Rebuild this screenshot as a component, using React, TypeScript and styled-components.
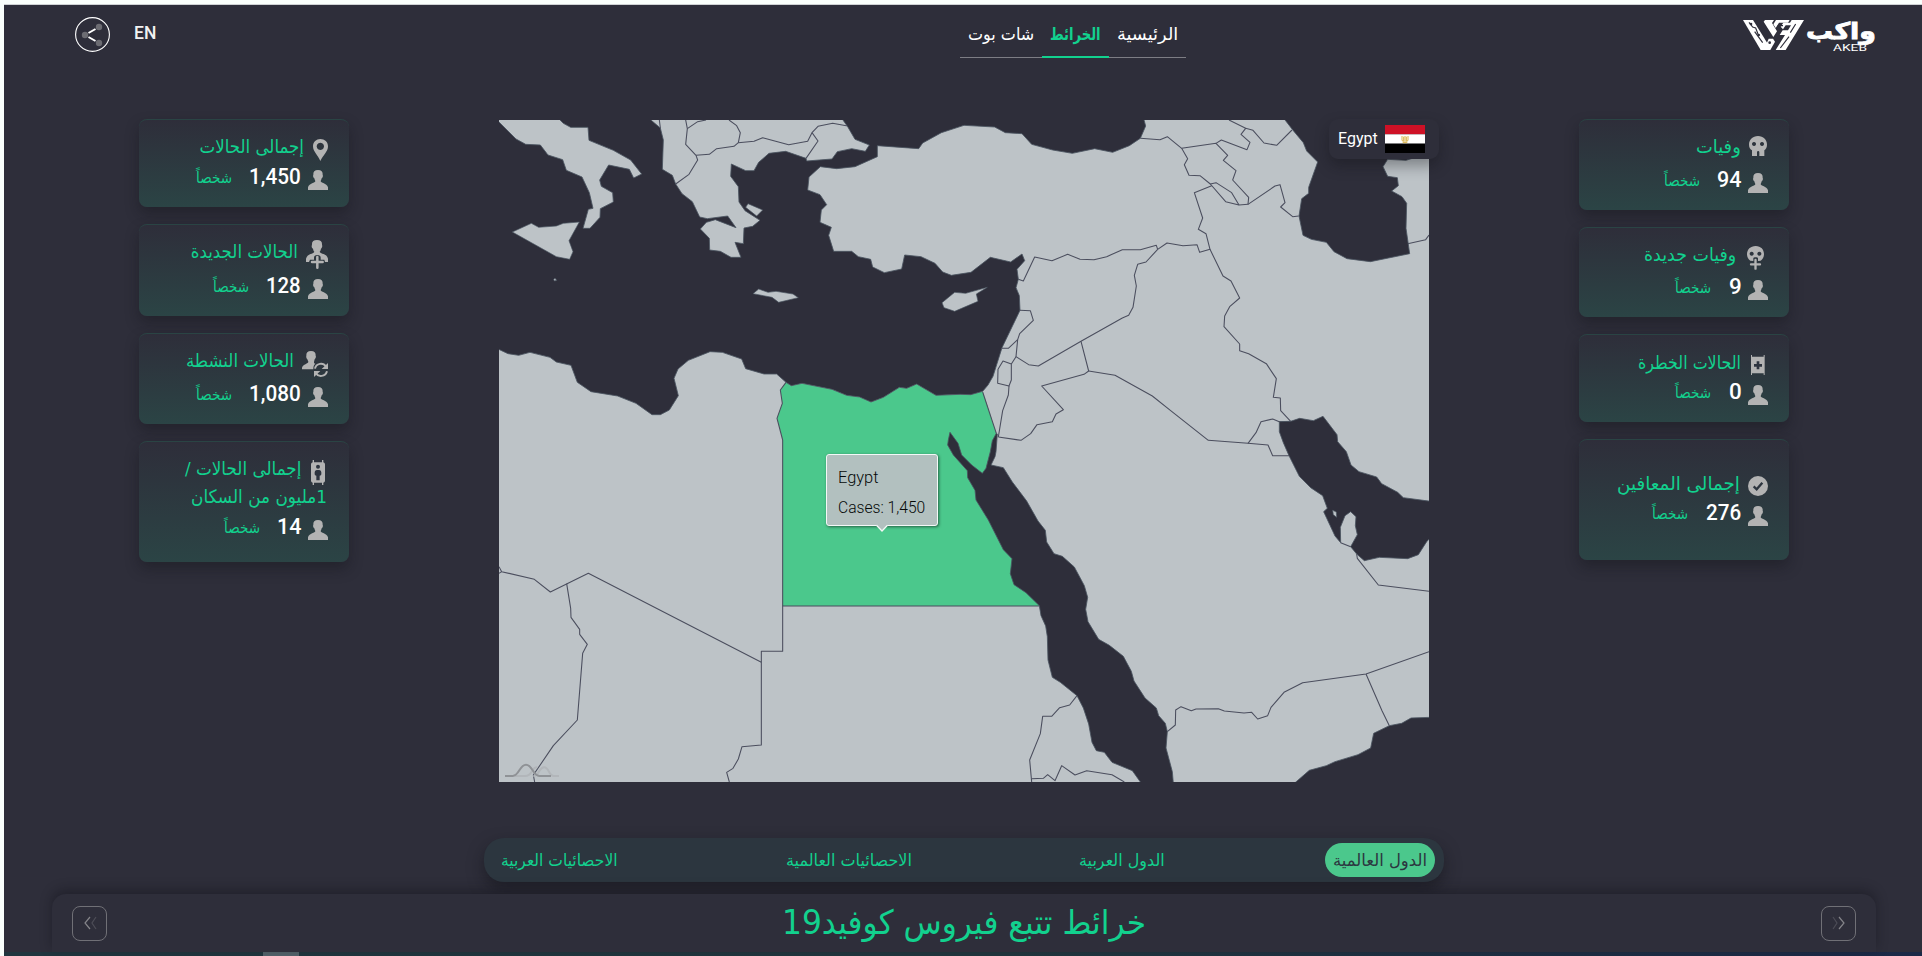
import React, { useLayoutEffect, useRef, useState } from "react";
import styled, { createGlobalStyle } from "styled-components";

const ARABIC = '"DejaVu Sans Condensed", "DejaVu Sans", sans-serif';
const LATIN = '"Roboto", "Open Sans", sans-serif';
const INK = "#2e2e3a";
const GREEN = "#12d18e";
const ICON = "#b3b3b3";

const GlobalStyle = createGlobalStyle`
  * { box-sizing: border-box; }
  body { margin: 0; background: #fafffc; font-family: ${LATIN}; overflow: hidden; }
  svg { display: block; }
`;

/* ---------- text fitted to a given width ---------- */

const FitBox = styled.span<{ $w: number }>`
  display: inline-block;
  width: ${(p) => p.$w}px;
  flex: none;
  white-space: nowrap;
`;
const FitInner = styled.span<{ $rtl: boolean }>`
  display: inline-block;
  transform-origin: ${(p) => (p.$rtl ? "right" : "left")} center;
`;

function Fit({ w, rtl = true, children }: { w: number; rtl?: boolean; children: React.ReactNode }) {
  const ref = useRef<HTMLSpanElement>(null);
  const [k, setK] = useState(1);
  useLayoutEffect(() => {
    if (ref.current) setK(w / ref.current.offsetWidth);
  }, [w]);
  return (
    <FitBox $w={w} dir={rtl ? "rtl" : "ltr"}>
      <FitInner ref={ref} $rtl={rtl} style={{ transform: `scaleX(${k})` }}>
        {children}
      </FitInner>
    </FitBox>
  );
}

/* ---------- frame ---------- */

const Screen = styled.div`
  margin: 4px 0 0 4px;
  height: 952px;
  background: ${INK};
  border-top: 1px solid #cfd2d4;
  display: flex;
  flex-direction: column;
`;

const Header = styled.header`
  height: 114px;
  flex: none;
  padding: 0 46px 0 71px;
  display: grid;
  grid-template-columns: 885px auto 1fr;
  align-items: start;
`;
const Tools = styled.div`
  display: flex;
  padding-top: 12px;
  gap: 24px;
`;
const Lang = styled.span`
  color: #f2f2f2;
  font: 500 17.5px/35px ${LATIN};
  margin-top: -1px;
`;
const Nav = styled.nav`
  display: flex;
  justify-self: start;
  margin-top: 12px;
  border-bottom: 1px solid #7d7d84;
`;
const NavItem = styled.a<{ $active?: boolean }>`
  height: 41px;
  padding: 0 8px;
  margin-bottom: -1px;
  font: ${(p) => (p.$active ? 700 : 400)} 17.5px/34px ${ARABIC};
  color: ${(p) => (p.$active ? GREEN : "#fff")};
  border-bottom: 2px solid ${(p) => (p.$active ? GREEN : "transparent")};
`;
const Brand = styled.div`
  justify-self: end;
  display: flex;
  gap: 2px;
  padding-top: 15px;
  color: #fff;
`;
const BrandWords = styled.div`
  display: flex;
  flex-direction: column;
  align-items: flex-end;
`;
const BrandName = styled.span`
  font: 700 23px/22px ${ARABIC};
  -webkit-text-stroke: 0.8px #fff;
  height: 24px;
`;
const BrandLatin = styled.span`
  font: 400 8.5px/8px ${LATIN};
  padding-right: 9px;
`;

const Main = styled.main`
  height: 719px;
  flex: none;
  padding: 0 135px;
  display: grid;
  grid-template-columns: 210px 930px 210px;
  column-gap: 150px;
  align-items: start;
`;
const Column = styled.section`
  display: flex;
  flex-direction: column;
  gap: 17px;
`;

/* ---------- statistic cards ---------- */

const Card = styled.article<{ $h: number; $pad: number }>`
  height: ${(p) => p.$h}px;
  padding: ${(p) => p.$pad}px 21px 0 12px;
  border-top: 1px solid #2a4444;
  border-radius: 8px;
  background: linear-gradient(#2e2e3a, #2b4445);
  box-shadow: 0 7px 14px rgba(16, 16, 22, 0.36);
  direction: rtl;
`;
const TitleRow = styled.div<{ $h: number }>`
  height: ${(p) => p.$h}px;
  display: flex;
  align-items: flex-start;
`;
const IconSlot = styled.span<{ $edge: number; $gap: number }>`
  flex: none;
  margin-right: ${(p) => p.$edge}px;
  margin-left: ${(p) => p.$gap}px;
`;
const Title = styled.h3<{ $shift: number }>`
  margin: ${(p) => p.$shift - 1}px 0 0;
  color: ${GREEN};
  font: 400 18.5px/20px ${ARABIC};
  white-space: nowrap;
`;
const SecondLine = styled.div`
  color: ${GREEN};
  font: 400 18.5px/20px ${ARABIC};
  margin: -1px 1px 1px 0;
  height: 32px;
`;
const ValueRow = styled.div`
  display: flex;
  height: 20px;
`;
const Value = styled.span`
  margin: -5px 7px 0 17px;
  color: #fff;
  font: 500 21.5px/24px ${LATIN};
`;
const Unit = styled.span`
  margin-top: -2px;
  color: ${GREEN};
  font: 400 15.5px/20px ${ARABIC};
`;

const Person = ({ size = 20 }: { size?: number }) => (
  <svg width={size} height={size} viewBox="0 0 60 60" fill={ICON}>
    <path d="M30 0C40 0 45 5 44 14C46 17 44 23 41 25C40 29 39 31 38 33C38 40 56 38 60 52V60H0V52C4 38 22 40 22 33C21 31 20 29 19 25C16 23 14 17 16 14C15 5 20 0 30 0Z" />
  </svg>
);
const Skull = () => (
  <svg width="18" height="20" viewBox="0 0 54 60" fill={ICON}>
    <path fillRule="evenodd" d="M27 0C43 0 54 11 54 26C54 35 50 40 46 43V60H31V49Q31 45 27.500 45T24 49V60H9V43C4 40 0 35 0 26C0 11 11 0 27 0ZM15 18a6 6 0 1 0 .1 0ZM39 18a6 6 0 1 0 .1 0Z" />
  </svg>
);
const SkullPlus = () => (
  <svg width="17" height="24" viewBox="0 0 51 72" fill={ICON}>
    <path fillRule="evenodd" d="M26 0C42 0 51 11 51 24C51 34 47 40 41 44L33 45V37C33 33 19 33 19 37V45L10 44C4 40 0 34 0 24C0 11 10 0 26 0ZM14 17a6 6 0 1 0 .1 0ZM37 17a6 6 0 1 0 .1 0Z" />
    <path d="M25.500 42V68M12 55H39" stroke={ICON} strokeWidth="7" strokeLinecap="round" />
  </svg>
);
const Bed = () => (
  <svg width="14" height="20" viewBox="0 0 42 60" fill={ICON}>
    <path d="M0 0H3V5H38V0H41V60H38V55H3V60H0Z" />
    <path d="M21 19V43M9 31H33" stroke="#2d343f" strokeWidth="8" />
  </svg>
);
const CheckDot = () => (
  <svg width="20" height="20" viewBox="0 0 60 60">
    <circle cx="30" cy="30" r="30" fill={ICON} />
    <path d="M17 31L26 40L43 20" fill="none" stroke="#2d353f" strokeWidth="7" />
  </svg>
);
const Pin = () => (
  <svg width="15" height="22" viewBox="0 0 45 66" fill={ICON}>
    <path fillRule="evenodd" d="M22 0C35 0 45 9 45 22C45 38 31 47 22 66C14 47 0 38 0 22C0 9 10 0 22 0ZM22 11a11 11 0 1 0 .1 0Z" />
  </svg>
);
const PersonPlus = () => (
  <svg width="22" height="29" viewBox="0 0 66 87" fill={ICON}>
    <path d="M33 0C44 0 49 5 48 15C50 18 48 24 45 26C44 31 43 33 41 35C42 42 63 40 66 56V66H57L55 59H44V53Q44 45 34 45T24 53V59H12L9 66H0V56C4 40 24 42 25 35C23 33 22 31 21 26C17 24 16 18 18 15C17 5 22 0 33 0Z" />
    <path d="M34 51V83M18 66H50" stroke={ICON} strokeWidth="7.500" strokeLinecap="round" />
  </svg>
);
const PersonCycle = () => (
  <svg width="26" height="26" viewBox="0 0 78 78" fill={ICON}>
    <path d="M27 0C37 0 42 5 41 14C43 17 41 22 38 25C37 29 36 31 36 35C37 37 38 38 40 38C34 43 34 50 34 55H0V50C3 38 19 39 19 32C18 30 17 28 16 25C13 22 12 17 13 14C12 5 17 0 27 0Z" />
    <path d="M39 53C42 36 64 34 71 46M75 61C70 78 49 78 43 68" fill="none" stroke={ICON} strokeWidth="6" />
    <path d="M78 36V54H59ZM36 78V60H55Z" />
  </svg>
);
const Stretcher = () => (
  <svg width="14" height="25" viewBox="0 0 42 75">
    <path fill={ICON} d="M5 0H9V7H33V0H37V7Q42 8 42 13V62Q42 67 37 68V75H33V68H9V75H5V68Q0 67 0 62V13Q0 8 5 7Z" />
    <circle cx="21" cy="20" r="6" fill="#2d343f" />
    <path fill="#2d343f" d="M17 30H25Q31 31 31 37V43Q31 47 26 47V61H16V47Q11 47 11 43V37Q11 31 17 30Z" />
  </svg>
);

interface Stat {
  title: string; w: number; value: string; vw: number; icon: React.ReactNode;
  h: number; pad: number; row: number; shift: number; edge?: number; gap?: number;
  second?: string;
}

const leftStats: Stat[] = [
  { title: "إجمالى الحالات", w: 105, value: "1,450", vw: 52, icon: <Pin />, h: 88, pad: 19, row: 31, shift: -1, gap: 9 },
  { title: "الحالات الجديدة", w: 107, value: "128", vw: 35, icon: <PersonPlus />, h: 92, pad: 15, row: 39, shift: 3, gap: 8 },
  { title: "الحالات النشطة", w: 108, value: "1,080", vw: 52, icon: <PersonCycle />, h: 91, pad: 17, row: 36, shift: 1, gap: 8 },
  { title: "إجمالى الحالات /", w: 116, value: "14", vw: 24, icon: <Stretcher />, h: 121, pad: 18, row: 28, shift: 0, edge: 3, gap: 10, second: "1مليون من السكان" },
];
const rightStats: Stat[] = [
  { title: "وفيات", w: 45, value: "94", vw: 24, icon: <Skull />, h: 91, pad: 16, row: 37, shift: 2, edge: 1, gap: 8 },
  { title: "وفيات جديدة", w: 92, value: "9", vw: 12.5, icon: <SkullPlus />, h: 90, pad: 18, row: 34, shift: 0, edge: 4, gap: 11 },
  { title: "الحالات الخطرة", w: 103, value: "0", vw: 12.5, icon: <Bed />, h: 88, pad: 20, row: 30, shift: -1, edge: 3, gap: 10 },
  { title: "إجمالى المعافين", w: 123, value: "276", vw: 35.5, icon: <CheckDot />, h: 121, pad: 36, row: 30, shift: -1, gap: 8 },
];

function StatCard(s: Stat) {
  return (
    <Card $h={s.h} $pad={s.pad}>
      <TitleRow $h={s.row}>
        <IconSlot $edge={s.edge ?? 0} $gap={s.gap ?? 8}>{s.icon}</IconSlot>
        <Title $shift={s.shift}><Fit w={s.w}>{s.title}</Fit></Title>
      </TitleRow>
      {s.second && <SecondLine><Fit w={136}>{s.second}</Fit></SecondLine>}
      <ValueRow>
        <Person />
        <Value><Fit w={s.vw} rtl={false}>{s.value}</Fit></Value>
        <Unit><Fit w={36}>شخصاً</Fit></Unit>
      </ValueRow>
    </Card>
  );
}

/* ---------- map ---------- */

const MapBox = styled.section`
  position: relative;
  margin-top: 1px;
  width: 930px;
  height: 662px;
`;

const NORTH_AFRICA_COAST =
  "1508,874 1472,884 1440,883 1368,886 1310,852 1280,865 1258,862 1210,892 1173,906 1139,891 1100,886 1056,868 966,850 934,857 918,847";

const MEDITERRANEAN =
  "50,60 57,66 108,117 137,133 181,135 204,165 248,179 259,211 306,231 328,278 339,325 325,328 309,385 330,385 360,352 361,326 400,306 398,278 364,259 359,240 386,195 448,208 461,234 485,222 452,180 400,151 327,121 324,82 272,82 250,70 236,56 " +
  "508,56 541,84 550,120 547,208 577,226 587,252 606,281 637,305 659,351 682,356 743,348 768,383 706,359 679,367 661,387 688,415 689,450 721,454 753,472 783,472 765,427 790,431 792,384 818,379 840,361 795,332 777,306 775,260 752,229 754,192 797,212 822,212 836,187 867,160 917,154 978,175 980,183 1056,177 1072,155 1115,146 1156,154 1168,135 1125,118 1103,80 1086,56 " +
  "1991,56 1997,78 1981,115 1948,137 1898,157 1844,146 1777,160 1718,150 1655,133 1626,101 1576,98 1544,81 1452,76 1384,98 1328,129 1316,146 1192,137 1192,170 1125,200 1070,206 1021,200 987,231 983,270 1020,284 1040,314 1024,330 1020,367 1054,382 1046,406 1061,454 1115,454 1135,470 1172,478 1178,501 1213,518 1265,507 1274,465 1323,470 1365,490 1388,516 1414,526 1473,517 1531,472 1592,486 1626,462 1634,482 1611,508 1615,538 1608,563 1618,587 1620,631 1566,743 1539,829 1524,855 " +
  NORTH_AFRICA_COAST +
  " 890,822 852,822 797,806 785,777 727,757 690,755 625,781 594,807 582,835 595,887 568,930 541,944 516,944 468,910 413,888 333,875 292,847 273,796 229,786 210,772 150,757 116,766 84,761 50,745";

const ISLANDS = [
  "97,396 154,370 176,382 229,378 250,370 298,366 267,422 279,455 269,478 229,470",
  "804,311 848,330 830,348 797,322",
  "819,581 836,567 864,577 888,574 939,582 955,593 896,607 876,592",
  "1386,608 1424,577 1457,580 1500,568 1522,562 1489,582 1494,604 1424,634 1392,623",
  "221,538 225,535 230,541 223,543",
];

const EGYPT =
  NORTH_AFRICA_COAST +
  " 901,870 907,910 891,955 908,1020 908,1518 1678,1518 1680,1500 1640,1370 1600,1200 1530,1110 1540,1060 1549,1000";

/* borders of the Balkans and Libya/Egypt */
const BORDERS_NW = [
  "538,60 541,84",
  "617,60 622,86 617,133 648,166 653,180 627,223 587,252",
  "622,86 653,65 678,60",
  "648,166 688,163 710,146 762,139 775,128 781,98 770,77 747,60",
  "775,128 822,124 848,113 926,134 983,124 996,98 1014,79 1058,70 1103,78",
  "996,98 1014,123 978,175",
  "918,847 901,870 907,910 891,955 908,1020",
];
/* Caucasus, Levant, Iraq, Iran */
const BORDERS_NE = [
  "541,115 600,119 622,110 665,145 683,176 673,194 687,226 720,227 751,252 797,305 837,315 864,313 945,258 960,254 975,308 962,321 998,350 1016,348",
  "665,145 768,130 803,166 790,181 828,212 818,240 866,292 864,313",
  "768,130 784,120 861,149 870,127 843,103 857,85 807,60",
  "857,85 879,91 912,129 950,136 996,90",
  "751,252 768,248 815,278 837,315",
  "755,257 703,278 728,354 715,388 738,401 750,448 789,528 813,543 839,594 809,620 794,648 792,680 839,732 839,752 866,761 919,791 949,836 940,892 961,894 962,932 992,964",
  "175,538 190,543 224,471 276,482 323,463 360,478 402,479 440,470 487,449 541,449 589,436 593,448 621,429 669,437 711,434 719,457 750,448",
  "593,448 558,486 533,493 523,526 529,558 519,622 506,646 487,654 363,724 235,798 206,794 168,770 173,719 179,701 220,661 211,632 180,631",
  "173,719 145,745 126,745",
  "363,724 386,813 372,823 245,858 310,929 288,942 277,965 231,974 212,1001 183,1021 115,1011",
  "386,813 465,826 577,888 632,932 745,1021 864,1030 924,1035 938,1067 987,1067",
  "864,1030 888,998 903,965 938,957 958,965 992,965",
  "168,770 154,792 154,840 147,858 113,850 114,808 129,783 154,792",
  "147,858 145,885 128,932 115,1011",
  "68,876 109,1000",
  "1343,431 1397,419 1407,405",
];
const CASPIAN =
  "972,56 1000,92 1030,128 1040,153 1073,186 1046,262 1046,280 1025,296 1017,348 1029,406 1054,418 1099,427 1122,455 1161,476 1231,485 1349,461 1338,385 1340,310 1326,290 1295,273 1315,257 1312,233 1283,229 1269,200 1283,178 1338,181 1360,174 1412,170 1412,56";

/* Chad, Niger, Sudan */
const BORDERS_SW = [
  "908,0 908,634 844,634 844,915 786,920 775,957 759,985 740,997 748,1026",
  "908,498 1678,498",
  "57,380 65,395 163,418 211,456 325,400 844,667",
  "57,400 65,395",
  "260,431 272,505 273,532 299,568 299,583 322,613 308,640 292,840 220,917 160,1005 164,1026",
];
/* Arabia and the Horn */
const BORDERS_SE = [
  "1142,308 1172,320",
  "1190,342 1192,355 1255,435 1407,454",
  "1407,635 1218,702 1028,728 972,757 933,802 923,827 893,837 875,817 852,819 793,813 775,806 708,807 694,812 663,800 647,810 646,855 622,875",
  "1218,702 1266,812 1288,857",
  "351,767 329,795 299,803 275,829 248,829 241,881 209,960 215,1026",
  "215,1016 250,1015 263,1004 285,1022 305,977 345,1005 380,992 456,1004 493,1026",
];
const SEAS_SE = [
  "958,-55 992,-56 1019,-65 1060,-58 1089,-71 1131,-16 1133,5 1159,35 1173,75 1197,95 1250,111 1265,131 1313,157 1330,173 1412,184 1412,292 1400,305 1375,344 1343,356 1258,352 1213,362 1190,342 1172,320 1192,284 1186,257 1188,230 1172,215 1155,227 1141,262 1142,308 1125,288 1091,215 1102,205 1088,167 1052,143 1018,109 987,47 970,8 958,-25",
  "1412,832 1353,834 1325,850 1288,857 1241,880 1232,924 1194,944 1125,965 1099,977 1048,991 1003,1030 1412,1030",
  "112,-18 108,35 105,50 93,75 130,83 157,126 200,183 234,243 256,271 260,306 282,341 307,349 343,381 373,437 383,472 377,508 384,545 416,598 448,616 490,649 514,694 522,723 555,774 589,804 596,827 616,850 622,875 618,924 637,995 640,1030 544,1030 517,992 456,967 433,937 409,932 396,907 386,852 370,804 351,767 301,727 277,712 264,660 262,590 257,558 243,527 238,497 198,458 162,434 151,401 156,356 130,329 85,240 48,180 45,151 23,113 22,92 -20,45 -37,15 -35,0 -30,-23 -6,10 5,45 35,75 67,100 78,85 91,35 97,2 109,-20",
];

function RegionMap() {
  const line = (p: string) => <polyline key={p} points={p} />;
  const sea = { fill: INK, stroke: "#4a5460", strokeWidth: 2.5 };
  const border = { fill: "none", stroke: "#4b4e5e", strokeWidth: 3.2 };
  return (
    <svg width="930" height="662" viewBox="57 60 2790 1986" strokeLinejoin="round">
      <rect x="57" y="60" width="2790" height="1986" fill="#bdc3c7" />
      <polygon points={EGYPT} fill="#4bc88c" />
      <g {...border}>{BORDERS_NW.map(line)}</g>
      <g {...border} transform="translate(1440 0)">{BORDERS_NE.map(line)}</g>
      <g {...border} transform="translate(0 1020)">{BORDERS_SW.map(line)}</g>
      <g {...border} transform="translate(1440 1020)">{BORDERS_SE.map(line)}</g>
      <g {...sea}>
        <polygon points={MEDITERRANEAN} />
        <polygon points={CASPIAN} transform="translate(1440 0)" />
        {SEAS_SE.map((p) => <polygon key={p} points={p} transform="translate(1440 1020)" />)}
      </g>
      <g fill="#bdc3c7" stroke="#4a5460" strokeWidth="2">
        {ISLANDS.map((p) => <polygon key={p} points={p} />)}
        <polygon points="2558,1231 2569,1236 2570,1252 2560,1244" />
      </g>
      <g fill="none" strokeWidth="6" transform="translate(0 1020)">
        <path d="M105 1008H135C160 1008 152 982 172 982" stroke="#b2b6ba" />
        <path d="M160 1008C178 1008 176 982 192 982C208 982 206 1008 222 1008H237" stroke="#b2b6ba" />
        <path d="M75 1008H98C118 1008 118 974 138 974C158 974 158 1008 178 1008H213" stroke="#8f9296" />
      </g>
    </svg>
  );
}

const Tooltip = styled.div`
  position: absolute;
  left: 327px;
  top: 334px;
  width: 112px;
  height: 72px;
  padding: 8px 0 0 11px;
  display: flex;
  flex-direction: column;
  color: #050908;
  background: #b2c0bf;
  border: 1.5px solid #f4f8f7;
  border-radius: 3px;
  box-shadow: 1px 1px 3px rgba(0, 0, 0, 0.5);
  font: 300 16px/30px ${LATIN};
`;
const TooltipTip = styled.svg`
  position: absolute;
  left: 49px;
  top: 69px;
`;
const CountryBadge = styled.div`
  position: absolute;
  left: 830px;
  top: -1px;
  width: 110px;
  height: 40px;
  padding: 0 14px 0 9px;
  display: flex;
  align-items: center;
  justify-content: space-between;
  border-radius: 9px;
  background: ${INK};
  color: #fff;
  font: 400 16px/36px ${LATIN};
  box-shadow: 0 7px 14px rgba(16, 16, 22, 0.36);
`;

const Flag = () => (
  <svg width="40" height="28" viewBox="0 0 120 84">
    <rect width="120" height="28" fill="#ce1126" />
    <rect y="28" width="120" height="28" fill="#fff" />
    <rect y="56" width="120" height="28" fill="#000" />
    <path d="M51 33V45Q52 50 56 49V35M69 33V45Q68 50 64 49V35M60 33V53M53 53H67" fill="none" stroke="#d9b44a" strokeWidth="3" />
  </svg>
);

/* ---------- tabs and footer ---------- */

const Tabs = styled.nav`
  width: 960px;
  height: 44px;
  flex: none;
  margin-left: 480px;
  padding: 0 10px 0 17px;
  display: flex;
  align-items: center;
  border-radius: 20px;
  background: #2c363f;
  box-shadow: 0 7px 16px rgba(16, 16, 22, 0.5);
`;
const Tab = styled.a<{ $gap?: number; $active?: boolean }>`
  margin-left: ${(p) => p.$gap ?? 0}px;
  height: 34px;
  padding: ${(p) => (p.$active ? "0 8px" : "0")};
  border-radius: 17px;
  background: ${(p) => (p.$active ? "#4bc88c" : "none")};
  color: ${(p) => (p.$active ? "#2c3640" : GREEN)};
  font: 400 16.5px/35px ${ARABIC};
`;
const Footer = styled.footer`
  position: relative;
  height: 58px;
  flex: none;
  margin: 12px 46px 0 48px;
  padding: 0 20px;
  display: flex;
  justify-content: space-between;
  align-items: center;
  border-radius: 14px 14px 0 0;
  background: ${INK};
  box-shadow: 0 -4px 12px rgba(16, 16, 22, 0.4);
`;
const PageTitle = styled.h1`
  margin: 0 0 0 1px;
  color: ${GREEN};
  font: 400 33.5px/56px ${ARABIC};
`;
const Arrow = styled.button`
  width: 35px;
  height: 35px;
  padding: 0;
  display: grid;
  place-items: center;
  background: none;
  border: 1px solid #707076;
  border-radius: 8px;
`;
const ScrollStrip = styled.div`
  height: 4px;
  flex: none;
  padding-left: 259px;
  background: linear-gradient(90deg, #20363f 0%, #21373f 52%, #1b2947 100%);
`;
const ScrollThumb = styled.div`
  width: 36px;
  height: 4px;
  background: #53636b;
`;

const Chevrons = ({ right = false }: { right?: boolean }) => (
  <svg width="14" height="14" viewBox="0 0 14 14" fill="none" strokeWidth="1.200">
    <path d={right ? "M1 1L5 7L1 13" : "M13 1L9 7L13 13"} stroke="#4d4d57" />
    <path d={right ? "M7 1L12 7L7 13" : "M7 1L2 7L7 13"} stroke="#85858a" />
  </svg>
);

const ShareIcon = () => (
  <svg width="35" height="35" viewBox="0 0 35 35">
    <circle cx="17.500" cy="17.500" r="16.900" fill="none" stroke="#fff" strokeWidth="1.100" />
    <path d="M20.500 12L13.500 16M13.500 20L20.500 24" stroke="#fff" strokeWidth="2" />
    <g fill="#6c6c72">
      <circle cx="10" cy="18" r="3.200" />
      <circle cx="24" cy="10" r="3.200" />
      <circle cx="24" cy="26" r="3.200" />
    </g>
  </svg>
);

const BrandMark = () => (
  <svg width="61" height="30" viewBox="0 0 183 90">
    <path fill="#fff" d="M0 0H30L77 76L68 90H53Z" />
    <path fill="#fff" d="M66 0H93L87 9L102 34L91 51L62 5Z" />
    <path fill="#fff" d="M99 0H140L135 8H108L98 24L91 13Z" />
    <path fill="#fff" d="M146 0H183L128 90H98L126 45H110L119 31H135L144 16H128L120 28L113 20L121 8H141Z" />
    <path fill="#fff" d="M77 56H90L96 65L82 90H62Z" />
    <path d="M18 7L29 21L38 24L45 42M35 35L59 68M158 12L142 38M138 50L112 84M104 17L120 17" fill="none" stroke={INK} strokeWidth="3.500" />
    <g fill={INK}>
      <circle cx="24" cy="12" r="4" />
      <circle cx="47" cy="45" r="4" />
      <circle cx="80" cy="68" r="4" />
    </g>
  </svg>
);

export default function App() {
  return (
    <>
      <GlobalStyle />
      <Screen>
        <Header>
          <Tools>
            <ShareIcon />
            <Lang><Fit w={22} rtl={false}>EN</Fit></Lang>
          </Tools>
          <Nav>
            <NavItem><Fit w={66}>شات بوت</Fit></NavItem>
            <NavItem $active><Fit w={51}>الخرائط</Fit></NavItem>
            <NavItem><Fit w={61}>الرئيسية</Fit></NavItem>
          </Nav>
          <Brand>
            <BrandMark />
            <BrandWords>
              <BrandName><Fit w={70}>واكب</Fit></BrandName>
              <BrandLatin><Fit w={34} rtl={false}>AKEB</Fit></BrandLatin>
            </BrandWords>
          </Brand>
        </Header>

        <Main>
          <Column>{leftStats.map((s) => <StatCard key={s.title} {...s} />)}</Column>
          <MapBox>
            <RegionMap />
            <Tooltip>
              <Fit w={40} rtl={false}>Egypt</Fit>
              <Fit w={87} rtl={false}>Cases: 1,450</Fit>
              <TooltipTip width="12" height="8" viewBox="0 0 12 8">
                <path d="M0.500 1.300L6 7L11.500 1.300V0H0.500Z" fill="#b2c0bf" />
                <path d="M0.500 1.300L6 7L11.500 1.300" fill="none" stroke="#f4f8f7" strokeWidth="1.300" />
              </TooltipTip>
            </Tooltip>
            <CountryBadge>
              <Fit w={40} rtl={false}>Egypt</Fit>
              <Flag />
            </CountryBadge>
          </MapBox>
          <Column>{rightStats.map((s) => <StatCard key={s.title} {...s} />)}</Column>
        </Main>

        <Tabs>
          <Tab><Fit w={117}>الاحصائيات العربية</Fit></Tab>
          <Tab $gap={168}><Fit w={126}>الاحصائيات العالمية</Fit></Tab>
          <Tab $gap={167}><Fit w={86}>الدول العربية</Fit></Tab>
          <Tab $gap={160} $active><Fit w={94}>الدول العالمية</Fit></Tab>
        </Tabs>

        <Footer>
          <Arrow><Chevrons /></Arrow>
          <PageTitle><Fit w={364}>خرائط تتبع فيروس كوفيد19</Fit></PageTitle>
          <Arrow><Chevrons right /></Arrow>
        </Footer>
        <ScrollStrip><ScrollThumb /></ScrollStrip>
      </Screen>
    </>
  );
}
